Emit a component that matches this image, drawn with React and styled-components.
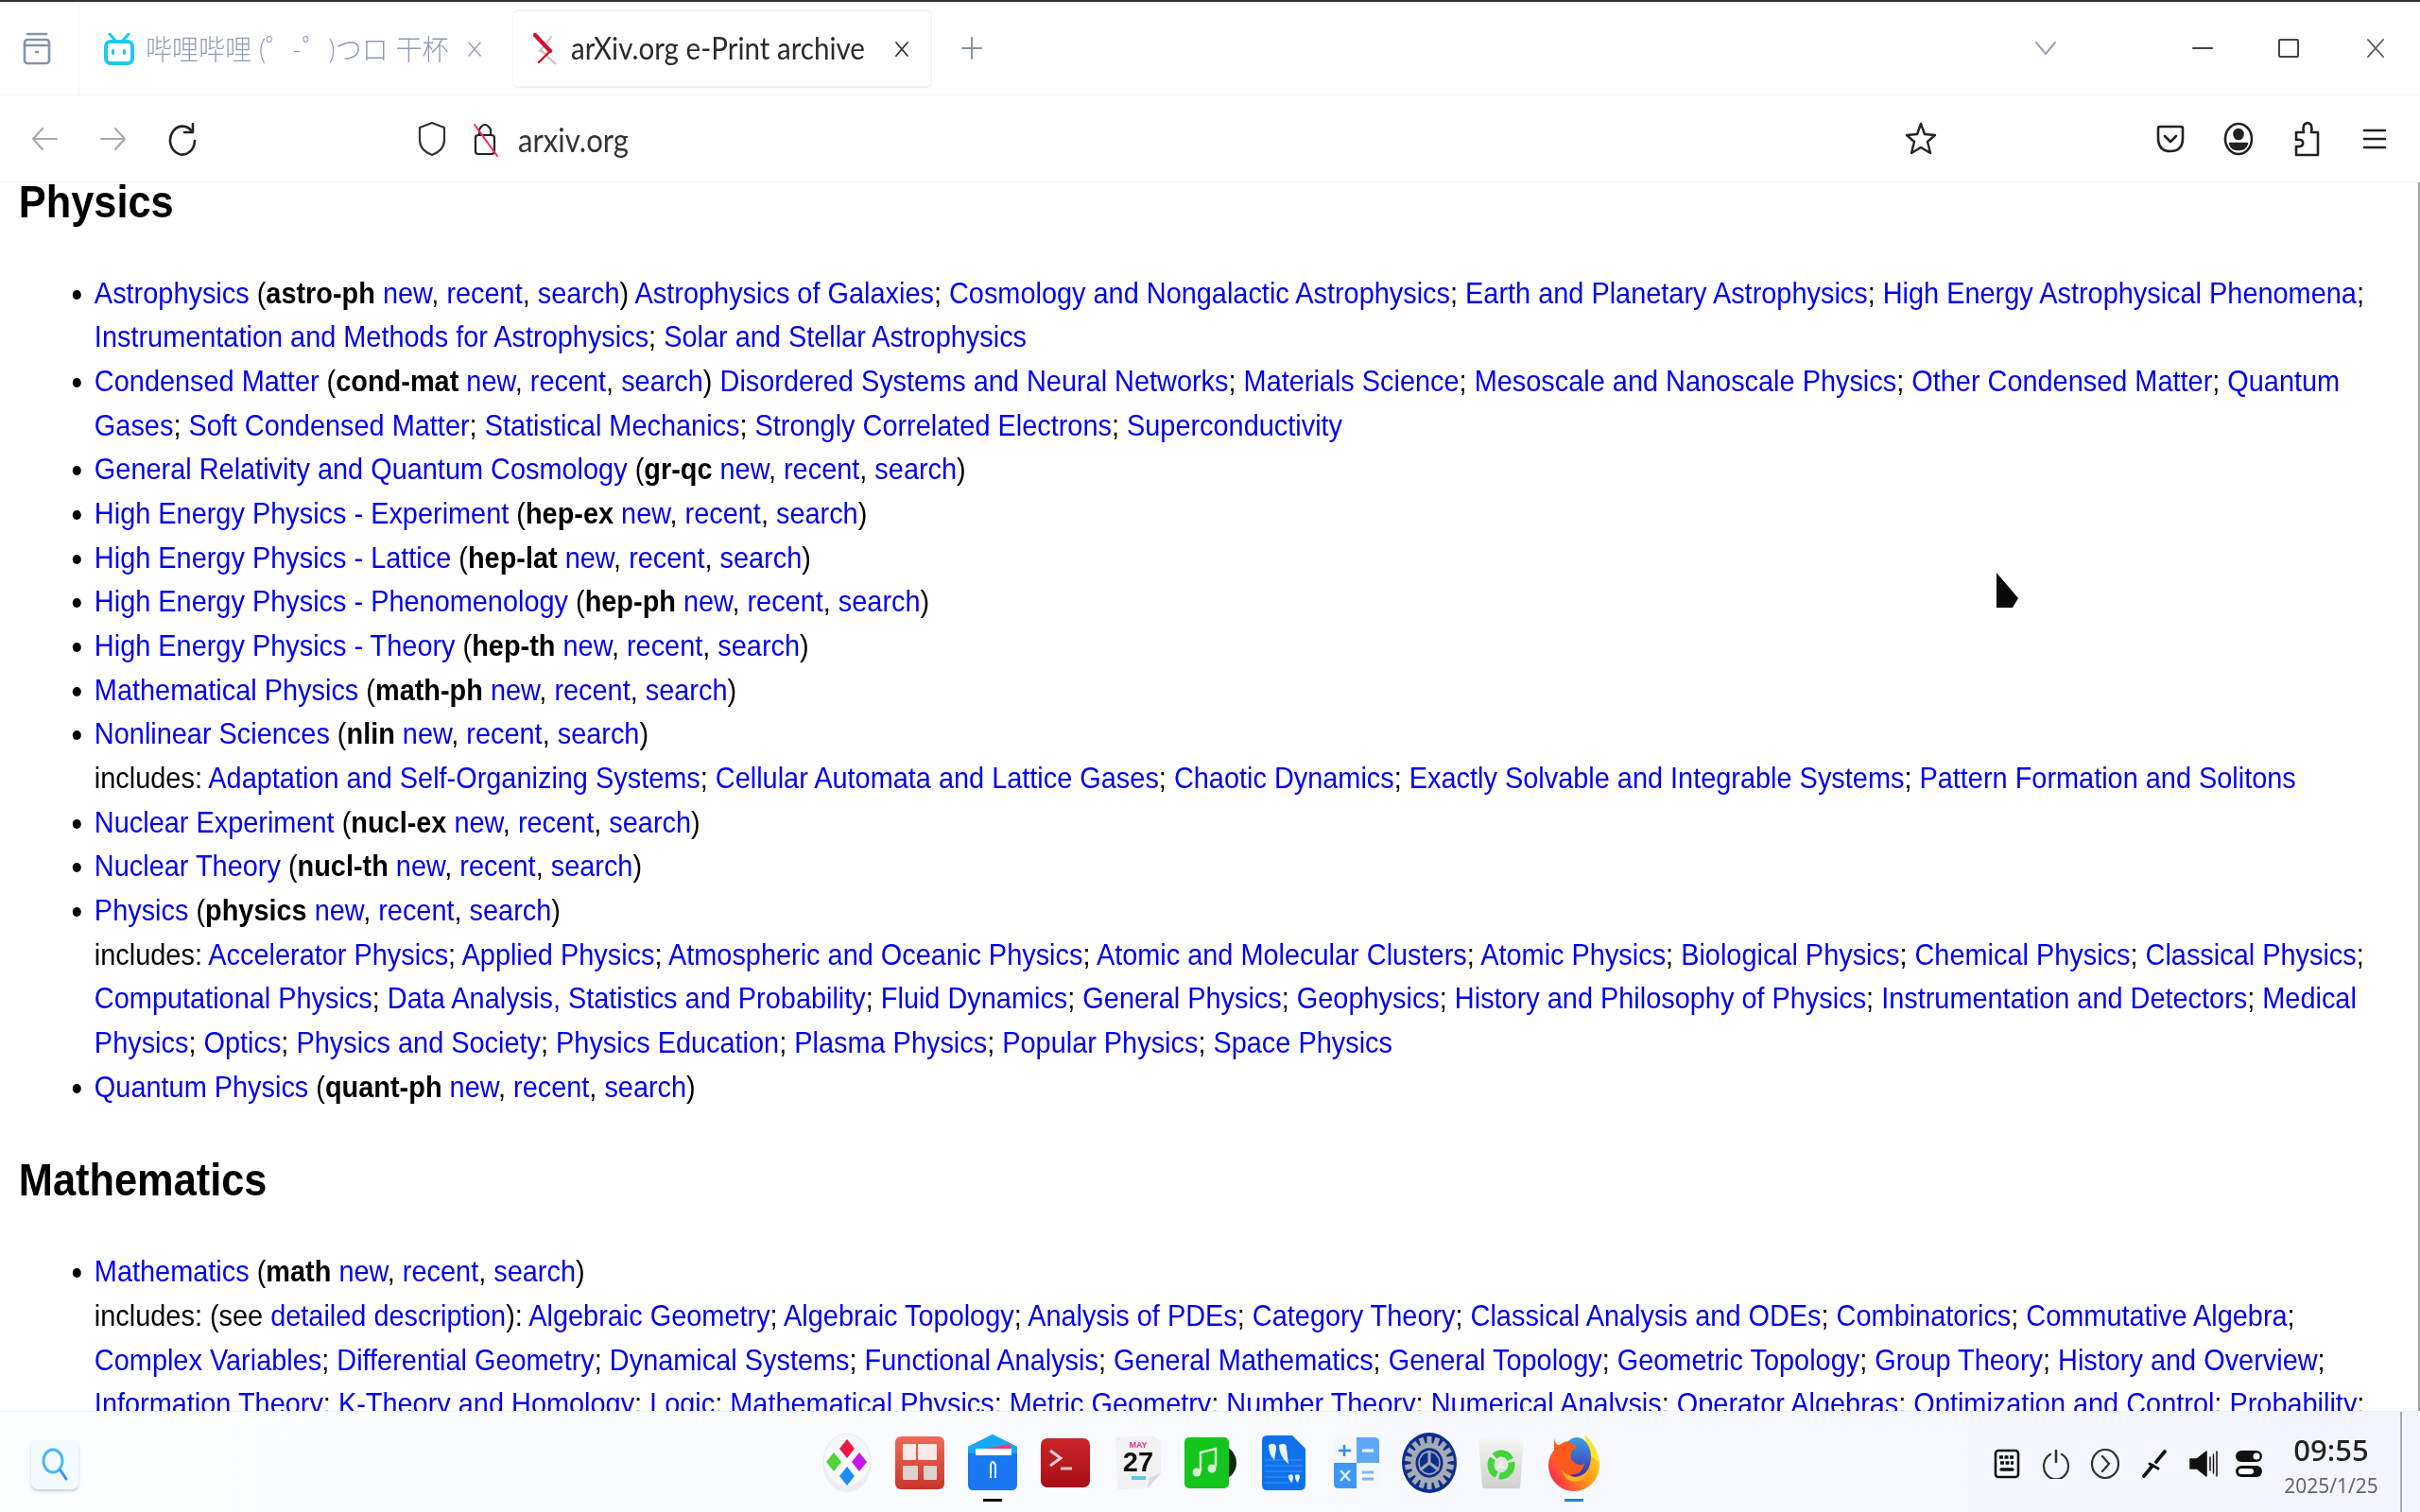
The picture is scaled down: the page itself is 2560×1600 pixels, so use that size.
import styled, { createGlobalStyle } from "styled-components";
import { Fragment } from "react";

const GlobalStyle = createGlobalStyle`
  html, body {
    margin: 0;
    padding: 0;
    background: #fff;
  }
  body {
    font-family: "Liberation Sans", Arial, sans-serif;
  }
`;

const Page = styled.div`
  position: relative;
  width: 2560px;
  height: 1600px;
  display: flex;
  flex-direction: column;
  overflow: hidden;
  background: #fff;
  filter: blur(0.5px);
`;

const TabBar = styled.div`
  height: 98px;
  flex: none;
  display: flex;
  align-items: stretch;
  border-top: 2px solid #333;
  border-bottom: 1px solid #eef6f6;
  box-sizing: content-box;
  padding-right: 1px;
`;

const TabManager = styled.div`
  width: 84px;
  flex: none;
  box-sizing: border-box;
  display: flex;
  align-items: center;
  justify-content: center;
  padding-right: 6px;
  border-right: 1px solid #f2f4f6;
`;

const Tab = styled.div`
  flex: none;
  box-sizing: border-box;
  display: flex;
  align-items: center;
  width: ${(p) => p.$width}px;
  margin: 8px 0 7px;
  padding-left: ${(p) => (p.$active ? 21 : 25)}px;
  border-radius: 6px;
  border: 1px solid ${(p) => (p.$active ? "#f3f3f3" : "transparent")};
  border-top-width: ${(p) => (p.$active ? 2 : 1)}px;
  border-bottom-width: ${(p) => (p.$active ? 2 : 1)}px;
  font-family: "Lato", "Noto Sans CJK SC", sans-serif;
`;

const TabTitle = styled.span`
  margin: 0 0 3px ${(p) => (p.$active ? 14 : 12)}px;
  width: ${(p) => (p.$active ? 318 : 323)}px;
  flex: none;
  white-space: nowrap;
  font-size: ${(p) => (p.$active ? 33 : 30)}px;
  font-weight: ${(p) => (p.$active ? 400 : 300)};
  color: ${(p) => (p.$active ? "#2b2b2b" : "#8f9cb5")};
  transform: scaleX(${(p) => (p.$active ? 0.896 : 0.935)});
  transform-origin: left center;
`;

const TabClose = styled.span`
  margin-left: ${(p) => (p.$active ? 23 : 16)}px;
  display: flex;
`;

const Slot = styled.div`
  flex: none;
  width: ${(p) => p.$w}px;
  display: flex;
  align-items: center;
  justify-content: center;
`;

const Push = styled.div`
  flex: ${(p) => (p.$w ? "none" : 1)};
  width: ${(p) => p.$w || 0}px;
`;

const NavBar = styled.div`
  height: 91px;
  flex: none;
  display: flex;
  align-items: center;
  padding: 0 12px 0 10px;
  border-bottom: 1px solid #eef6f6;
`;

const UrlText = styled.span`
  margin-left: 20px;
  width: 118px;
  font-family: "Lato", sans-serif;
  font-size: 35px;
  color: #333;
  transform: scaleX(0.89);
  transform-origin: left center;
`;

const Content = styled.main`
  flex: 1;
  min-height: 0;
  overflow: hidden;
  border-right: 2px solid #a8a8a8;
`;

// the reference page is squeezed horizontally, so the sheet is set wide and scaled back
const Sheet = styled.div`
  width: 2802px;
  box-sizing: border-box;
  padding-left: 22px;
  font-size: 32px;
  line-height: 46.67px;
  color: #000;
  transform: scaleX(0.903);
  transform-origin: left top;
`;

const SectionTitle = styled.h2`
  margin: ${(p) => (p.$first ? "-1.5px" : "54px")} 0 51px;
  font-size: 48px;
  line-height: 44px;
  font-weight: 700;
`;

const List = styled.ul`
  margin: 0;
  padding: 0 0 0 88.6px;
`;

const Link = styled.span`
  color: #0000ee;
`;

const Code = styled.b`
  font-weight: 700;
`;

const Dock = styled.footer`
  height: 106px;
  flex: none;
  display: grid;
  grid-template-columns: 858px auto 1fr;
  background: linear-gradient(90deg, #fbfeff 0%, #f9fbfe 45%, #f2f5fd 100%);
  border-top: 1px solid #eceef1;
`;

const SearchCell = styled.div`
  padding: 30px 0 0 33px;
`;

const SearchButton = styled.div`
  width: 50px;
  height: 52px;
  display: flex;
  align-items: center;
  justify-content: center;
  border-radius: 7px;
  background: #f3fbff;
  box-shadow: 0 2px 3px rgba(120, 150, 190, 0.45);
`;

const DockApps = styled.div`
  display: flex;
`;

const DockItem = styled.div`
  width: 76.9px;
  display: flex;
  flex-direction: column;
  align-items: center;
  padding-top: 22px;
`;

const DockIcon = styled.div`
  height: 64px;
  display: flex;
  align-items: center;
  justify-content: center;
`;

const RunMark = styled.div`
  width: 20px;
  height: 3px;
  margin-top: 6px;
  background: ${(p) => p.$color};
`;

const Tray = styled.div`
  display: flex;
  align-items: center;
  justify-content: flex-end;
`;

const TrayIcons = styled.div`
  display: flex;
  align-items: center;
  margin-top: 4px;
`;

const Clock = styled.div`
  width: 120px;
  margin-left: 5px;
  display: flex;
  flex-direction: column;
  align-items: center;
  color: #222;
  font-family: "Noto Sans", sans-serif;
`;

const ClockTime = styled.span`
  font-size: 31px;
  line-height: 36px;
  font-weight: 500;
  margin-top: 9px;
`;

const ClockDate = styled.span`
  font-size: 21px;
  line-height: 30px;
  margin-top: 5px;
  color: #666;
`;

const TrayEdge = styled.div`
  align-self: stretch;
  width: 19px;
  margin-left: 13px;
  border-left: 2px solid #a9abb0;
`;

const Cursor = styled.svg`
  position: absolute;
  left: 2106px;
  top: 600px;
`;

const Ico = ({ w = 36, h = 36, vb, children, sw = 2.4, color = "#222", fill = "none" }) => (
  <svg width={w} height={h} viewBox={vb || `0 0 ${w} ${h}`} fill={fill} stroke={color} strokeWidth={sw} strokeLinecap="round" strokeLinejoin="round">
    {children}
  </svg>
);

const entries = {
  physics: [
    {
      name: "Astrophysics",
      code: "astro-ph",
      inline: ["Astrophysics of Galaxies", "Cosmology and Nongalactic Astrophysics", "Earth and Planetary Astrophysics", "High Energy Astrophysical Phenomena", "Instrumentation and Methods for Astrophysics", "Solar and Stellar Astrophysics"],
    },
    {
      name: "Condensed Matter",
      code: "cond-mat",
      inline: ["Disordered Systems and Neural Networks", "Materials Science", "Mesoscale and Nanoscale Physics", "Other Condensed Matter", "Quantum Gases", "Soft Condensed Matter", "Statistical Mechanics", "Strongly Correlated Electrons", "Superconductivity"],
    },
    { name: "General Relativity and Quantum Cosmology", code: "gr-qc" },
    { name: "High Energy Physics - Experiment", code: "hep-ex" },
    { name: "High Energy Physics - Lattice", code: "hep-lat" },
    { name: "High Energy Physics - Phenomenology", code: "hep-ph" },
    { name: "High Energy Physics - Theory", code: "hep-th" },
    { name: "Mathematical Physics", code: "math-ph" },
    {
      name: "Nonlinear Sciences",
      code: "nlin",
      includes: ["Adaptation and Self-Organizing Systems", "Cellular Automata and Lattice Gases", "Chaotic Dynamics", "Exactly Solvable and Integrable Systems", "Pattern Formation and Solitons"],
    },
    { name: "Nuclear Experiment", code: "nucl-ex" },
    { name: "Nuclear Theory", code: "nucl-th" },
    {
      name: "Physics",
      code: "physics",
      includes: ["Accelerator Physics", "Applied Physics", "Atmospheric and Oceanic Physics", "Atomic and Molecular Clusters", "Atomic Physics", "Biological Physics", "Chemical Physics", "Classical Physics", "Computational Physics", "Data Analysis, Statistics and Probability", "Fluid Dynamics", "General Physics", "Geophysics", "History and Philosophy of Physics", "Instrumentation and Detectors", "Medical Physics", "Optics", "Physics and Society", "Physics Education", "Plasma Physics", "Popular Physics", "Space Physics"],
    },
    { name: "Quantum Physics", code: "quant-ph" },
  ],
  math: [
    {
      name: "Mathematics",
      code: "math",
      detailed: true,
      includes: ["Algebraic Geometry", "Algebraic Topology", "Analysis of PDEs", "Category Theory", "Classical Analysis and ODEs", "Combinatorics", "Commutative Algebra", "Complex Variables", "Differential Geometry", "Dynamical Systems", "Functional Analysis", "General Mathematics", "General Topology", "Geometric Topology", "Group Theory", "History and Overview", "Information Theory", "K-Theory and Homology", "Logic", "Mathematical Physics", "Metric Geometry", "Number Theory", "Numerical Analysis", "Operator Algebras", "Optimization and Control", "Probability", "Quantum Algebra", "Representation Theory", "Rings and Algebras", "Spectral Theory", "Statistics Theory", "Symplectic Geometry"],
    },
  ],
};

const Subjects = ({ items }) =>
  items.map((s, i) => (
    <Fragment key={s}>
      <Link>{s}</Link>
      {i < items.length - 1 ? "; " : ""}
    </Fragment>
  ));

const Entry = ({ e }) => (
  <li>
    <Link>{e.name}</Link> (<Code>{e.code}</Code> <Link>new</Link>, <Link>recent</Link>, <Link>search</Link>)
    {e.inline && (
      <>
        {" "}
        <Subjects items={e.inline} />
      </>
    )}
    {e.includes && (
      <>
        <br />
        includes: {e.detailed && (<>(see <Link>detailed description</Link>): </>)}
        <Subjects items={e.includes} />
      </>
    )}
  </li>
);

const ArxivMark = () => (
  <svg width="26" height="34" viewBox="0 0 26 34" fill="none" strokeLinecap="round">
    <path d="M19 4 L7 19" stroke="#cfcac5" strokeWidth="2.4" />
    <path d="M9 19 L23 32" stroke="#cfcac5" strokeWidth="2.6" />
    <path d="M2 2 L18 19" stroke="#d0112f" strokeWidth="4.4" />
    <path d="M17 20 L6 31" stroke="#d0112f" strokeWidth="2.4" />
  </svg>
);

const BiliMark = () => (
  <svg width="32" height="34" viewBox="0 0 32 34" fill="none">
    <path d="M6 1 L12 8 M26 1 L20 8" stroke="#1ec8f0" strokeWidth="3" strokeLinecap="round" />
    <rect x="2" y="9" width="28" height="23" rx="5" stroke="#1ec8f0" strokeWidth="4" />
    <rect x="8" y="17" width="3" height="6" rx="1.5" fill="#1ec8f0" />
    <rect x="20" y="17" width="3" height="6" rx="1.5" fill="#1ec8f0" />
  </svg>
);

const AppLauncher = () => (
  <svg width="56" height="64" viewBox="0 0 56 64">
    <ellipse cx="28" cy="32" rx="26" ry="31" fill="#eceef2" />
    <ellipse cx="28" cy="29" rx="24" ry="27" fill="#f7f8fa" />
    <path d="M28 7 L36 17 L28 27 L20 17 Z" fill="#ef1747" />
    <path d="M41 21 L49 31 L41 41 L33 31 Z" fill="#c614e6" />
    <path d="M28 36 L36 46 L28 56 L20 46 Z" fill="#1d8bf5" />
    <path d="M14 21 L22 31 L14 41 L6 31 Z" fill="#4fd43a" />
  </svg>
);

const AppGrid = () => (
  <svg width="52" height="56" viewBox="0 0 52 56">
    <defs>
      <linearGradient id="gridBg" x1="0" y1="0" x2="0" y2="1">
        <stop offset="0" stopColor="#ef6a57" />
        <stop offset="1" stopColor="#c8362c" />
      </linearGradient>
    </defs>
    <rect width="52" height="56" rx="6" fill="url(#gridBg)" />
    <rect x="8" y="8" width="14" height="17" rx="1" fill="#fbe9e5" />
    <rect x="24" y="8" width="20" height="17" rx="1" fill="#fbe9e5" />
    <rect x="8" y="31" width="16" height="15" rx="1" fill="#dcd2ce" />
    <rect x="30" y="31" width="14" height="15" rx="1" fill="#dcd2ce" />
  </svg>
);

const AppFiles = () => (
  <svg width="52" height="60" viewBox="0 0 52 60">
    <path d="M0 13 L26 0 L52 13 L52 53 Q52 59 46 59 L6 59 Q0 59 0 53 Z" fill="#1978f2" />
    <path d="M26 0 L52 13 L52 20 L0 20 L0 13 Z" fill="#14a8f5" />
    <path d="M8 17 L45 10 L46 22 L8 22 Z" fill="#f03a78" />
    <rect x="8" y="15" width="38" height="7" fill="#fff" />
    <path d="M24 46 L24 32 Q26 26 29 32 L29 46" stroke="#fff" strokeWidth="1.8" fill="none" />
  </svg>
);

const AppTerminal = () => (
  <svg width="52" height="52" viewBox="0 0 52 52">
    <defs>
      <linearGradient id="termBg" x1="0" y1="0" x2="0" y2="1">
        <stop offset="0" stopColor="#c9252b" />
        <stop offset="1" stopColor="#a80f14" />
      </linearGradient>
    </defs>
    <rect width="52" height="52" rx="7" fill="url(#termBg)" />
    <path d="M10 13 L21 21 L10 29" stroke="#f0d5d5" strokeWidth="3" fill="none" />
    <path d="M21 32 L33 32" stroke="#e9c5c5" strokeWidth="3" />
  </svg>
);

const AppCalendar = () => (
  <svg width="52" height="58" viewBox="0 0 52 58">
    <path d="M2 2 L42 0 L50 6 L50 42 L36 56 L4 57 Z" fill="#f2f2f2" />
    <path d="M50 40 L38 44 L36 56 Z" fill="#dcdcdc" />
    <text x="26" y="13" textAnchor="middle" fontFamily="Liberation Sans" fontWeight="700" fontSize="9" fill="#e8269a">MAY</text>
    <text x="26" y="38" textAnchor="middle" fontFamily="Liberation Sans" fontWeight="700" fontSize="29" fill="#111">27</text>
    <rect x="19" y="43" width="15" height="4" fill="#5cc4ee" />
  </svg>
);

const AppMusic = () => (
  <svg width="56" height="56" viewBox="0 0 56 56">
    <circle cx="36" cy="28" r="19" fill="#0a2a12" />
    <rect width="47" height="54" y="1" rx="5" fill="#14c51e" />
    <path d="M17 37 L17 17 L33 13 L33 32" stroke="#d7efd0" strokeWidth="2.4" fill="none" />
    <circle cx="13" cy="38" r="4.5" fill="#d7efd0" />
    <circle cx="29" cy="34" r="4.5" fill="#d7efd0" />
  </svg>
);

const AppQuotes = () => (
  <svg width="46" height="58" viewBox="0 0 46 58">
    <path d="M5 0 L32 0 L46 14 L46 52 Q46 58 40 58 L5 58 Q0 58 0 52 L0 6 Q0 0 5 0 Z" fill="#0f72ec" />
    <path d="M3 26 H43 M3 32 H43 M3 38 H43 M3 44 H30 M3 50 H30" stroke="#3d92f2" strokeWidth="1.2" />
    <path d="M7 10 Q15 6 15 14 L13 26 Q7 20 7 10 Z M18 10 Q26 6 26 14 L28 30 Q18 22 18 10 Z" fill="#eaf1fb" />
    <path d="M28 42 Q33 40 33 44 L32 50 Q28 48 28 42 Z M35 42 Q40 40 40 44 L38 50 Q35 48 35 42 Z" fill="#eaf1fb" />
  </svg>
);

const AppCalc = () => (
  <svg width="48" height="54" viewBox="0 0 48 54">
    <rect width="48" height="54" rx="5" fill="#f6f8fb" />
    <path d="M24 0 H43 Q48 0 48 5 V27 H24 Z" fill="#5da8f5" />
    <path d="M0 27 H24 V54 H5 Q0 54 0 49 Z" fill="#3d97f5" />
    <path d="M11 8 V20 M5 14 H18" stroke="#2e8df0" strokeWidth="2.6" />
    <path d="M30 14 H42" stroke="#fff" strokeWidth="3" />
    <path d="M7 35 L17 46 M17 35 L7 46" stroke="#dcecff" strokeWidth="2.6" />
    <path d="M30 37 H42 M30 44 H42" stroke="#7cb6f7" strokeWidth="3" />
  </svg>
);

const AppGear = () => {
  const teeth = Array.from({ length: 18 }, (_, i) => i * 20);
  return (
    <svg width="58" height="64" viewBox="0 0 58 64">
      <ellipse cx="29" cy="32" rx="29" ry="32" fill="#0c2f8f" />
      <g transform="translate(29 32) scale(1 1.08) translate(-29 -32)">
        {teeth.map((a) => (
          <rect key={a} x="26.5" y="6" width="5" height="8" fill="#a6abb4" transform={`rotate(${a} 29 32)`} />
        ))}
        <circle cx="29" cy="32" r="17" fill="none" stroke="#a6abb4" strokeWidth="5" />
        <circle cx="29" cy="32" r="11" fill="none" stroke="#a6abb4" strokeWidth="1.4" />
        <path d="M29 32 L29 20 M29 32 L19 39 M29 32 L39 39" stroke="#a6abb4" strokeWidth="3" />
      </g>
    </svg>
  );
};

const AppTrash = () => (
  <svg width="50" height="54" viewBox="0 0 50 54">
    <defs>
      <linearGradient id="binBg" x1="0" y1="0" x2="0" y2="1">
        <stop offset="0" stopColor="#f5f5f3" />
        <stop offset="1" stopColor="#cfd1cd" />
      </linearGradient>
    </defs>
    <path d="M1 2 H49 L45 52 Q45 54 42 54 H8 Q5 54 5 52 Z" fill="url(#binBg)" />
    <ellipse cx="25" cy="29" rx="11" ry="12" fill="none" stroke="#41d63a" strokeWidth="7" strokeDasharray="20 3" />
    <path d="M25 24 L30 33 L20 33 Z" fill="#e9f2e6" />
  </svg>
);

const AppFirefox = () => (
  <svg width="54" height="60" viewBox="0 0 54 60">
    <defs>
      <linearGradient id="foxBg" x1="0" y1="0.8" x2="1" y2="0.2">
        <stop offset="0" stopColor="#ff1f4b" />
        <stop offset="0.5" stopColor="#ff8a1a" />
        <stop offset="1" stopColor="#ffd91f" />
      </linearGradient>
      <linearGradient id="foxGlobe" x1="0.5" y1="0" x2="0.5" y2="1">
        <stop offset="0" stopColor="#3aa0e0" />
        <stop offset="1" stopColor="#3b2fb0" />
      </linearGradient>
    </defs>
    <ellipse cx="27" cy="33" rx="27" ry="27" fill="url(#foxBg)" />
    <path d="M38 0 Q52 12 54 30 L42 20 Z" fill="#ffe22a" />
    <ellipse cx="30" cy="24" rx="15" ry="21" fill="url(#foxGlobe)" />
    <path d="M6 4 Q8 14 14 10 Q22 4 30 14 Q22 16 24 26 Q32 36 38 30 Q36 44 22 42 Q8 36 6 22 Z" fill="#ff5a1c" />
    <path d="M14 38 Q28 52 42 38 Q38 50 28 50 Q18 50 14 38 Z" fill="#ffb01c" />
  </svg>
);

const apps = [
  { key: "launcher", Icon: AppLauncher },
  { key: "grid", Icon: AppGrid },
  { key: "files", Icon: AppFiles, run: "#111" },
  { key: "terminal", Icon: AppTerminal },
  { key: "calendar", Icon: AppCalendar },
  { key: "music", Icon: AppMusic },
  { key: "quotes", Icon: AppQuotes },
  { key: "calc", Icon: AppCalc },
  { key: "gear", Icon: AppGear },
  { key: "trash", Icon: AppTrash },
  { key: "firefox", Icon: AppFirefox, run: "#2a7de1" },
];

export default function App() {
  return (
    <Page>
      <GlobalStyle />
      <TabBar>
        <TabManager>
          <Ico w={34} h={38} color="#8792a8" sw={2.6}>
            <path d="M7 4 H27" />
            <rect x="4" y="10" width="26" height="25" rx="3" />
            <path d="M4 16 H30" />
            <path d="M16 23 H18" />
          </Ico>
        </TabManager>
        <Tab $width={458}>
          <BiliMark />
          <TabTitle>哔哩哔哩 (゜-゜)つロ 干杯</TabTitle>
          <TabClose>
            <Ico w={18} h={18} color="#98a3b8" sw={1.6}>
              <path d="M3 2 L15 16 M15 2 L3 16" />
            </Ico>
          </TabClose>
        </Tab>
        <Tab $active $width={444}>
          <ArxivMark />
          <TabTitle $active>arXiv.org e-Print archive</TabTitle>
          <TabClose $active>
            <Ico w={18} h={18} color="#333" sw={1.8}>
              <path d="M3 2 L15 16 M15 2 L3 16" />
            </Ico>
          </TabClose>
        </Tab>
        <Slot $w={84}>
          <Ico w={24} h={26} color="#8792a8" sw={2}>
            <path d="M12 2 V24 M2 13 H22" />
          </Ico>
        </Slot>
        <Push />
        <Slot $w={60}>
          <Ico w={24} h={16} color="#98a3b8" sw={2}>
            <path d="M2 2 L12 14 L22 2" />
          </Ico>
        </Slot>
        <Push $w={90} />
        <Slot $w={91}>
          <Ico w={22} h={4} color="#444" sw={2}>
            <path d="M1 2 H21" />
          </Ico>
        </Slot>
        <Slot $w={91}>
          <Ico w={22} h={20} color="#444" sw={2}>
            <rect x="1" y="1" width="20" height="18" rx="1" />
          </Ico>
        </Slot>
        <Slot $w={93}>
          <Ico w={20} h={20} color="#555" sw={1.8}>
            <path d="M2 1 L18 19 M18 1 L2 19" />
          </Ico>
        </Slot>
      </TabBar>

      <NavBar>
        <Slot $w={73}>
          <Ico w={30} h={30} color="#aaa" sw={2.2}>
            <path d="M28 15 H3 M13 4 L3 15 L13 26" />
          </Ico>
        </Slot>
        <Slot $w={73}>
          <Ico w={30} h={30} color="#aaa" sw={2.2}>
            <path d="M2 15 H27 M17 4 L27 15 L17 26" />
          </Ico>
        </Slot>
        <Slot $w={73}>
          <Ico w={32} h={36} color="#222" sw={2.6}>
            <path d="M26 10 A13 15 0 1 0 29 20" />
            <path d="M27 2 V11 H18" />
          </Ico>
        </Slot>
        <Push $w={213} />
        <Ico w={30} h={38} color="#333" sw={2.2}>
          <path d="M15 2 L28 7 V20 Q28 31 15 36 Q2 31 2 20 V7 Z" />
        </Ico>
        <Push $w={28} />
        <Ico w={28} h={38} color="#222" sw={2.2}>
          <rect x="3" y="15" width="20" height="20" rx="3" />
          <path d="M7 15 V9 Q13 -1 19 9 V15" />
          <path d="M2 4 L26 37" stroke="#f5246a" strokeWidth="2" />
        </Ico>
        <UrlText>arxiv.org</UrlText>
        <Push />
        <Slot $w={72}>
          <Ico w={34} h={36} color="#222" sw={2.4}>
            <path d="M17 2 L21 13 L32 14 L24 21 L27 33 L17 27 L7 33 L10 21 L2 14 L13 13 Z" />
          </Ico>
        </Slot>
        <Push $w={192} />
        <Slot $w={72}>
          <Ico w={30} h={30} color="#222" sw={2.6}>
            <path d="M4 2 H26 Q28 2 28 4 V14 Q28 28 15 28 Q2 28 2 14 V4 Q2 2 4 2 Z" />
            <path d="M9 12 L15 18 L21 12" />
          </Ico>
        </Slot>
        <Slot $w={72}>
          <Ico w={32} h={36} color="#222" sw={2.6}>
            <ellipse cx="16" cy="18" rx="14" ry="16" />
            <ellipse cx="16" cy="13" rx="4.5" ry="5" fill="#222" />
            <path d="M7 23 H25 Q23 29 16 29 Q9 29 7 23 Z" fill="#222" />
          </Ico>
        </Slot>
        <Slot $w={72}>
          <Ico w={30} h={38} color="#222" sw={2.6}>
            <path d="M4 36 V27 H8 Q12 26 11 22 Q10 19 4 20 V12 H12 Q10 3 16 2 Q22 3 20 12 H27 V36 Z" />
          </Ico>
        </Slot>
        <Slot $w={72}>
          <Ico w={26} h={24} color="#222" sw={2.6}>
            <path d="M2 3 H24 M2 12 H24 M2 21 H24" />
          </Ico>
        </Slot>
      </NavBar>

      <Content>
        <Sheet>
          <SectionTitle $first>Physics</SectionTitle>
          <List>
            {entries.physics.map((e) => (
              <Entry key={e.code} e={e} />
            ))}
          </List>
          <SectionTitle>Mathematics</SectionTitle>
          <List>
            {entries.math.map((e) => (
              <Entry key={e.code} e={e} />
            ))}
          </List>
        </Sheet>
      </Content>

      <Dock>
        <SearchCell>
          <SearchButton>
            <Ico w={30} h={36} color="#4ab8f5" sw={3}>
              <ellipse cx="13" cy="14" rx="10" ry="12" />
              <path d="M21 24 L27 33" stroke="#2f9bf0" />
            </Ico>
          </SearchButton>
        </SearchCell>
        <DockApps>
          {apps.map(({ key, Icon, run }) => (
            <DockItem key={key}>
              <DockIcon>
                <Icon />
              </DockIcon>
              {run && <RunMark $color={run} />}
            </DockItem>
          ))}
        </DockApps>
        <Tray>
          <TrayIcons>
            <Slot $w={52}>
              <Ico w={28} h={32} color="#111" sw={2.6}>
                <rect x="2" y="2" width="24" height="28" rx="3" />
                <path d="M6 9 H22 M7 15 H21" strokeWidth="3.4" strokeDasharray="4 1.5" strokeLinecap="butt" />
                <path d="M8 22 H20" strokeWidth="3.4" />
              </Ico>
            </Slot>
            <Slot $w={52}>
              <Ico w={30} h={32} color="#333" sw={2.2}>
                <path d="M9 6 A13 14 0 1 0 21 6" />
                <path d="M15 2 V14" strokeWidth="2.6" />
              </Ico>
            </Slot>
            <Slot $w={52}>
              <Ico w={30} h={32} color="#333" sw={2.2}>
                <ellipse cx="15" cy="16" rx="14" ry="15" />
                <path d="M12 8 L19 16 L12 24" />
              </Ico>
            </Slot>
            <Slot $w={52}>
              <Ico w={26} h={30} color="#111" sw={3.6}>
                <path d="M2 28 L11 17" />
                <path d="M15 13 L24 2" />
                <path d="M8 15 L17 20" strokeWidth="3" />
              </Ico>
            </Slot>
            <Slot $w={52}>
              <Ico w={30} h={30} color="#111" sw={1.5}>
                <path d="M1 10 H8 L18 2 V28 L8 20 H1 Z" fill="#111" />
                <path d="M22 8 V22 M25.5 5 V25 M29 2 V28" />
              </Ico>
            </Slot>
            <Slot $w={44}>
              <Ico w={30} h={30} color="#111" sw={0}>
                <rect x="1" y="1" width="28" height="12" rx="6" fill="#111" />
                <circle cx="23" cy="7" r="3.5" fill="#fff" />
                <rect x="1" y="17" width="28" height="12" rx="6" fill="#111" />
                <rect x="4" y="20" width="16" height="6" rx="3" fill="#fff" />
              </Ico>
            </Slot>
          </TrayIcons>
          <Clock>
            <ClockTime>09:55</ClockTime>
            <ClockDate>2025/1/25</ClockDate>
          </Clock>
          <TrayEdge />
        </Tray>
      </Dock>

      <Cursor width="40" height="56" viewBox="0 0 40 56">
        <path d="M4 4 L32 34 L24 46 L4 46 Z" fill="#fff" opacity="0.8" />
        <path d="M6 6 L29 33 L23 43 L6 43 Z" fill="#0a0a0a" />
      </Cursor>
    </Page>
  );
}
